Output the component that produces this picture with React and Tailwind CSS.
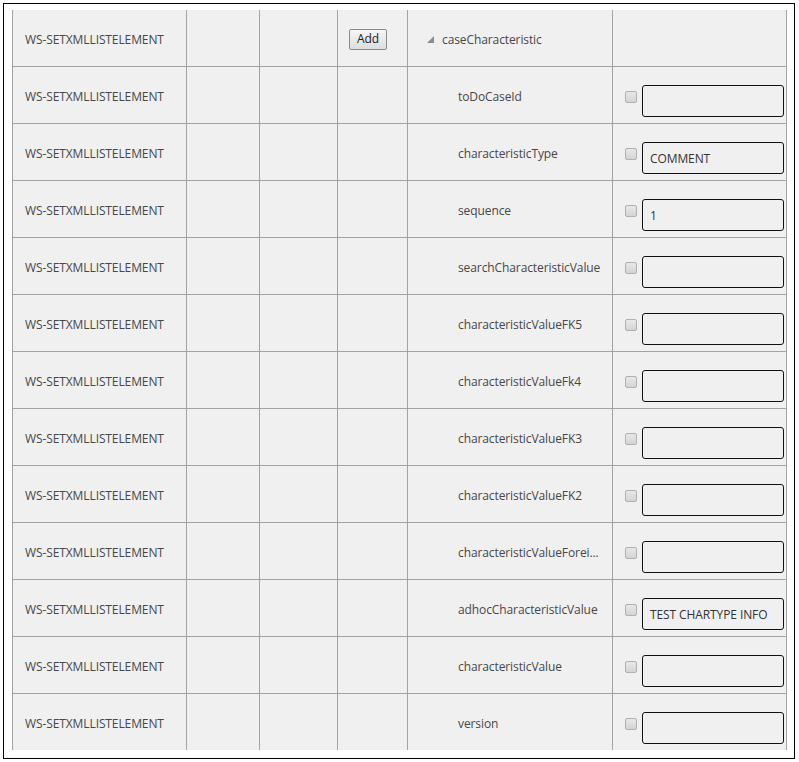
import React from 'react';

const rows = [
  { name: 'caseCharacteristic', head: true },
  { name: 'toDoCaseId', value: '' },
  { name: 'characteristicType', value: 'COMMENT' },
  { name: 'sequence', value: '1' },
  { name: 'searchCharacteristicValue', value: '' },
  { name: 'characteristicValueFK5', value: '' },
  { name: 'characteristicValueFk4', value: '' },
  { name: 'characteristicValueFK3', value: '' },
  { name: 'characteristicValueFK2', value: '' },
  { name: 'characteristicValueForei...', value: '' },
  { name: 'adhocCharacteristicValue', value: 'TEST CHARTYPE INFO' },
  { name: 'characteristicValue', value: '' },
  { name: 'version', value: '' },
];

const cell = 'border-l border-[#a3a3a3] h-[56px] flex items-center';

const Row = ({ row }) => (
  <div className="grid grid-cols-[174px_73px_78px_70px_205px_174px] border-r border-[#a3a3a3]">
    <div className={`${cell} pl-[12px] pt-[3px]`}>WS-SETXMLLISTELEMENT</div>
    <div className={cell} />
    <div className={cell} />
    <div className={`${cell} pl-[11px] pt-[2px]`}>
      {row.head && (
        <button className="w-[38px] h-[21px] border border-[#8a8a8a] rounded-[2px] bg-gradient-to-b from-[#f6f6f6] to-[#dddddd] text-[12px] text-[#222] leading-none">
          Add
        </button>
      )}
    </div>
    <div className={`${cell} pt-[3px]`}>
      {row.head ? (
        <div className="flex items-center pl-[19px] gap-[8px]">
          <svg width="7" height="7" viewBox="0 0 7 7">
            <path d="M7 0 L7 7 L0 7 Z" fill="#8c8c8c" />
          </svg>
          <span>{row.name}</span>
        </div>
      ) : (
        <span className="pl-[50px] whitespace-nowrap">{row.name}</span>
      )}
    </div>
    <div className={`${cell} items-start`}>
      {!row.head && (
        <div className="flex items-start pl-[12px] pt-[18px] gap-[5px]">
          <span className="mt-[6px] w-[12px] h-[12px] rounded-[2px] border border-[#b0b0b0] bg-gradient-to-b from-[#e8e8e8] to-[#d4d4d4]" />
          <div className="w-[142px] h-[32px] border border-[#111] rounded-[3px] flex items-center pl-[7px] pt-[2px] text-[12px] text-[#333]">
            {row.value}
          </div>
        </div>
      )}
    </div>
  </div>
);

const App = () => {
  return (
    <div className="w-[799px] h-[762px] bg-white pt-[3px] pl-[3px]">
      <div
        className="w-[792px] h-[756px] border border-black pl-[8px] pt-[6px] text-[12px] text-[#474747] tracking-[-0.1px]"
        style={{ fontFamily: '"Open Sans", "Noto Sans", sans-serif' }}
      >
        <div className="w-[775px] bg-[#f0f0f0] divide-y divide-[#a3a3a3]">
          {rows.map((row, i) => (
            <Row key={i} row={row} />
          ))}
        </div>
      </div>
    </div>
  );
};

export default App;
